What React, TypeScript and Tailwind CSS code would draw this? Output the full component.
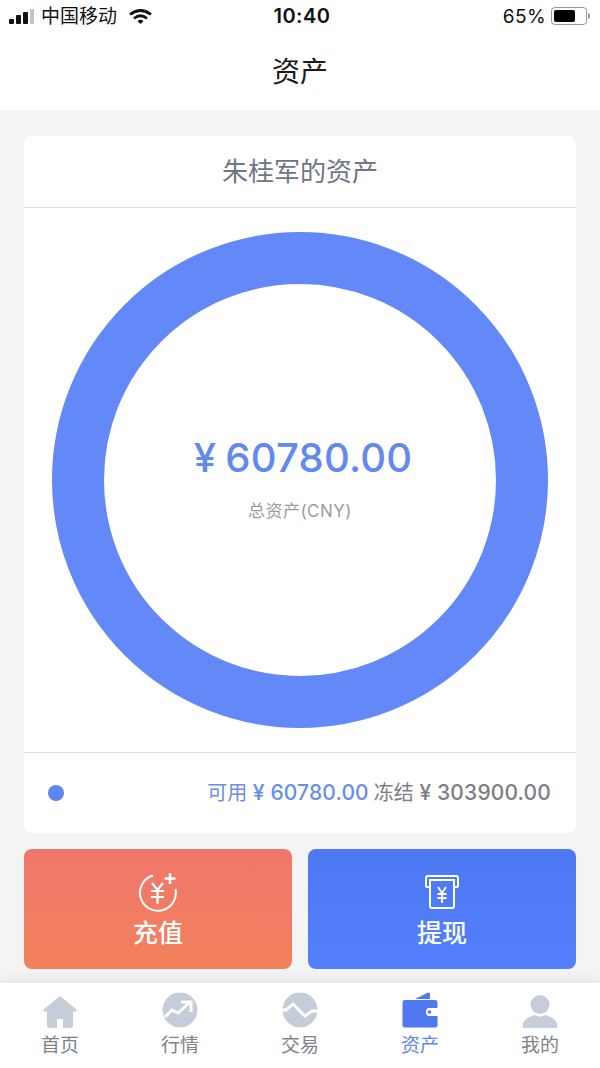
const cjk = "font-['Inter','Noto_Sans_CJK_SC',sans-serif]";

function WifiIcon() {
  return (
    <svg width="23" height="15" viewBox="0 0 23 15" fill="none" stroke="#111" strokeWidth="2.800">
      <path d="M1 5.500 Q11.500 -2.500 22 5.500" />
      <path d="M5 9.500 Q11.500 4 18 9.500" />
      <path d="M8.500 12 L11.500 15 L14.500 12 Q11.500 9.500 8.500 12 Z" fill="#111" stroke="none" />
    </svg>
  );
}

function HomeIcon() {
  return (
    <svg width="34" height="32" viewBox="0 0 34 32">
      <path d="M17 0 L33.500 13.500 Q34.500 15.500 32 15.500 L30 15.500 L30 30 Q30 32 28 32 L6 32 Q4 32 4 30 L4 15.500 L2 15.500 Q-.5 15.500 .5 13.500 Z" fill="#c5cdd9" />
      <rect x="14" y="23" width="6" height="9" fill="#fff" />
    </svg>
  );
}

function MarketIcon() {
  return (
    <svg width="36" height="36" viewBox="0 0 36 36">
      <circle cx="18" cy="18" r="17.500" fill="#c5cdd9" />
      <path d="M3 25 L10 18 L16 21 L27 11" fill="none" stroke="#fff" strokeWidth="3" />
      <path d="M19 10 L29 10 L29 20" fill="none" stroke="#fff" strokeWidth="3" />
    </svg>
  );
}

function TradeIcon() {
  return (
    <svg width="36" height="36" viewBox="0 0 36 36">
      <circle cx="18" cy="18" r="17.500" fill="#c5cdd9" />
      <path d="M0 18 L4 18 L11 12 L23 24 L30 19 L36 19" fill="none" stroke="#fff" strokeWidth="3" />
    </svg>
  );
}

function WalletIcon() {
  return (
    <svg width="36" height="36" viewBox="0 0 36 36">
      <path d="M13 7 L26 .5 Q28 0 28 2 L28 7 Z" fill="#5079f0" />
      <path d="M3 8 L33 8 Q35.500 8 35.500 10 L35.500 16 L27 16 Q24 16 24 20 Q24 24 27 24 L35.500 24 L35.500 33 Q35.500 35.500 33 35.500 L3 35.500 Q.5 35.500 .5 33 L.5 10 Q.5 8 3 8 Z" fill="#5079f0" />
      <circle cx="27.500" cy="20" r="1.800" fill="#5079f0" />
    </svg>
  );
}

function UserIcon() {
  return (
    <svg width="34" height="33" viewBox="0 0 34 33">
      <circle cx="17" cy="9.500" r="9.500" fill="#c5cdd9" />
      <path d="M0 33 L0 29 Q1 23 12 20 Q17 23 22 20 Q33 23 34 29 L34 33 Z" fill="#c5cdd9" />
    </svg>
  );
}

function RechargeIcon() {
  return (
    <svg width="40" height="40" viewBox="0 0 40 40" fill="none" stroke="#fff" strokeWidth="2">
      <path d="M15 3.500 A18 18 0 1 0 37.500 17" />
      <path d="M14 11 L19.500 18 L25 11 M13 19 L26 19 M13 25 L26 25 M19.500 18 L19.500 32" strokeWidth="2.200" />
      <path d="M32 1 L32 12 M26.500 6.500 L37.500 6.500" strokeWidth="2.500" />
    </svg>
  );
}

function WithdrawIcon() {
  return (
    <svg width="34" height="34" viewBox="0 0 34 34" fill="none" stroke="#fff" strokeWidth="2">
      <path d="M4 12 L2 12 Q1 12 1 11 L1 3 Q1 1 3 1 L31 1 Q33 1 33 3 L33 11 Q33 12 32 12 L30 12" />
      <path d="M5 5 L29 5 L29 31 Q29 33 27 33 L7 33 Q5 33 5 31 Z" />
      <path d="M13 12 L17 18 L21 12 M12.500 19 L21.500 19 M12.500 23 L21.500 23 M17 18 L17 28" strokeWidth="1.800" />
    </svg>
  );
}

const tabs = [
  { label: "首页", icon: <HomeIcon /> },
  { label: "行情", icon: <MarketIcon /> },
  { label: "交易", icon: <TradeIcon /> },
  { label: "资产", icon: <WalletIcon />, active: true },
  { label: "我的", icon: <UserIcon /> },
];

function StatusBar() {
  return (
    <div className="flex h-[32px] items-center justify-between pl-[9px] pr-[10px] text-[#111]">
      <div className="flex w-[200px] items-center">
        <div className="flex items-end gap-[2px]">
          <span className="h-[5px] w-[5px] rounded-[1px] bg-[#111]" />
          <span className="h-[9px] w-[5px] rounded-[1px] bg-[#111]" />
          <span className="h-[12px] w-[5px] rounded-[1px] bg-[#111]" />
          <span className="h-[15px] w-[4px] rounded-[1px] bg-[#c4c4c4]" />
        </div>
        <span className="ml-[7px] text-[19px] leading-none">中国移动</span>
        <span className="ml-[12px]">
          <WifiIcon />
        </span>
      </div>
      <span className="ml-[5px] text-[20px] font-semibold leading-none tracking-[0.5px]">10:40</span>
      <div className="flex w-[200px] items-center justify-end">
        <span className="text-[19px] leading-none tracking-[0.4px]">65%</span>
        <div className="ml-[5px] flex h-[18px] w-[36px] items-center rounded-[4px] border border-[#999] p-[2px]">
          <div className="h-full w-[21px] rounded-[2px] bg-black" />
        </div>
        <span className="ml-[1px] h-[6px] w-[2px] rounded-r-sm bg-[#999]" />
      </div>
    </div>
  );
}

export default function App() {
  return (
    <div className={`${cjk} flex h-[1068px] w-[600px] flex-col overflow-hidden bg-[#f4f4f4]`}>
      <div className="h-[110px] bg-white">
        <StatusBar />
        <div className="mt-[20px] text-center text-[28px] leading-[40px] text-[#1a1a1a]">资产</div>
      </div>

      <div className="flex-1 px-[24px] pt-[26px]">
        <div className="rounded-[8px] bg-white">
          <div className="flex h-[72px] items-center justify-center border-b border-b-[#dcdde0] text-[26px] text-[#6f7585]">
            朱桂军的资产
          </div>
          <div className="flex h-[545px] items-center justify-center border-b border-b-[#dcdde0]">
            <div className="flex h-[496px] w-[496px] flex-col items-center justify-center rounded-full border-[52px] border-[#6289f7]">
              <div className="ml-[6px] mt-[-5px] flex items-center text-[40px] font-medium leading-[50px] tracking-[0.25px] text-[#6289f0]">
                <span className="mr-[9px]">¥</span>60780.00
              </div>
              <div className="mt-[16px] text-[17px] leading-[24px] tracking-[0.5px] text-[#9a9ca3]">总资产(CNY)</div>
            </div>
          </div>
          <div className="flex h-[80px] items-center justify-between pl-[24px] pr-[25px]">
            <span className="h-[16px] w-[16px] rounded-full bg-[#5d86f2]" />
            <div className="text-[20px]">
              <span className="text-[#6a8de8]">
                可用 <span className="text-[21px] font-medium tracking-[0.15px]">¥ 60780.00</span>
              </span>
              <span className="ml-[5px] text-[#7d7e84]">
                冻结 <span className="text-[21px] font-medium tracking-[0.15px]">¥ 303900.00</span>
              </span>
            </div>
          </div>
        </div>

        <div className="mt-[16px] flex gap-[16px]">
          <div className="flex h-[120px] flex-1 flex-col items-center rounded-[8px] bg-gradient-to-b from-[#f0776b] to-[#f1815c] pt-[23px] text-white">
            <RechargeIcon />
            <span className="mt-[3px] text-[25px] font-medium leading-[36px]">充值</span>
          </div>
          <div className="flex h-[120px] flex-1 flex-col items-center rounded-[8px] bg-gradient-to-b from-[#4d78f4] to-[#527ffb] pt-[26px] text-white">
            <WithdrawIcon />
            <span className="mt-[6px] text-[25px] font-medium leading-[36px]">提现</span>
          </div>
        </div>
      </div>

      <div className="flex h-[85px] bg-white shadow-[0_-4px_12px_rgba(0,0,0,0.06)]">
        {tabs.map((tab) => (
          <div key={tab.label} className="flex flex-1 flex-col items-center">
            <div className="flex h-[45px] items-end">{tab.icon}</div>
            <span className={`mt-[4px] text-[19px] leading-[28px] ${tab.active ? "text-[#5f85ee]" : "text-[#7f8289]"}`}>
              {tab.label}
            </span>
          </div>
        ))}
      </div>
    </div>
  );
}
